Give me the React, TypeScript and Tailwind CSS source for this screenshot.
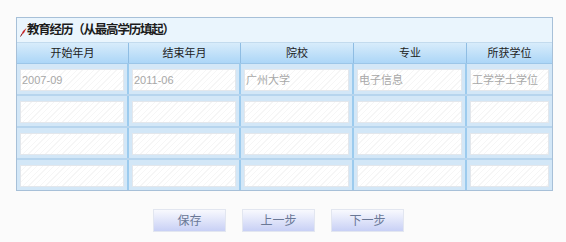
import React from "react";

interface Education {
    start: string;
    end: string;
    school: string;
    major: string;
    degree: string;
}

const headers = ["开始年月", "结束年月", "院校", "专业", "所获学位"];

const rows: Education[] = [
    { start: "2007-09", end: "2011-06", school: "广州大学", major: "电子信息", degree: "工学学士学位" },
    { start: "", end: "", school: "", major: "", degree: "" },
    { start: "", end: "", school: "", major: "", degree: "" },
    { start: "", end: "", school: "", major: "", degree: "" },
];

const gridCols = "grid grid-cols-[112px_112px_113px_113px_1fr]";

function Cell({ value, last }: { value: string; last: boolean }) {
    return (
        <div className={`px-[3px] pt-[5px] pb-[3px] ${last ? "" : "border-r-2 border-[#9ccbee]"}`}>
            <div className="h-[22px] border border-[#e3e7ec] bg-[repeating-linear-gradient(135deg,#ffffff_0px,#ffffff_3px,#f6f6f6_3px,#f6f6f6_4px)] px-[1px] text-[11px] leading-[20px] text-[#a8a8a8]">
                {value}
            </div>
        </div>
    );
}

export default function App() {
    return (
        <main
            className="w-[566px] h-[242px] bg-[#fbfbfb] pt-[17px] pl-[16px]"
            style={{ fontFamily: '"Liberation Sans", "Noto Sans CJK SC", sans-serif' }}
        >
            <div className="w-[537px] border border-[#a7c0d8] bg-[#c9e0f3]">
                {/* title bar */}
                <div className="h-[25px] bg-[#eaf5fd] flex items-center pl-[3px] border-b border-[#c3dbee]">
                    <svg width="7" height="10" viewBox="0 0 7 10" className="mt-[3px]">
                        <path d="M1 8 L3 4 L6.5 1 L4 6 Z" fill="#c8282c" />
                        <path d="M0.5 9.5 L2 7" stroke="#7a1a1a" strokeWidth="1" />
                    </svg>
                    <span className="text-[12.5px] font-bold text-[#1c1c1c] tracking-[-1.2px]">
                        教育经历（从最高学历填起）
                    </span>
                </div>

                {/* header row */}
                <div className={`${gridCols} h-[21px] bg-[linear-gradient(#d8ecfb,#acd6f7)] border-b border-[#9cc6e8]`}>
                    {headers.map((h, i) => (
                        <div
                            key={h}
                            className={`flex items-center justify-center text-[11px] text-[#222] ${i < headers.length - 1 ? "border-r border-[#8fbde3]" : ""}`}
                        >
                            {h}
                        </div>
                    ))}
                </div>

                {/* data rows */}
                {rows.map((r, idx) => {
                    const values = [r.start, r.end, r.school, r.major, r.degree];
                    return (
                        <div
                            key={idx}
                            className={`${gridCols} bg-[#d3e7f7] ${idx > 0 ? "border-t-2 border-[#b7d5ee]" : ""}`}
                        >
                            {values.map((v, i) => (
                                <Cell key={i} value={v} last={i === values.length - 1} />
                            ))}
                        </div>
                    );
                })}
            </div>

            {/* buttons */}
            <div className="flex gap-[16px] mt-[18px] ml-[137px]">
                {["保存", "上一步", "下一步"].map((b) => (
                    <button
                        key={b}
                        className="w-[73px] h-[23px] border border-[#e2e6f0] bg-[linear-gradient(#f8f9fe,#c8d0f5)] text-[12px] text-[#6a7896]"
                    >
                        {b}
                    </button>
                ))}
            </div>
        </main>
    );
}
